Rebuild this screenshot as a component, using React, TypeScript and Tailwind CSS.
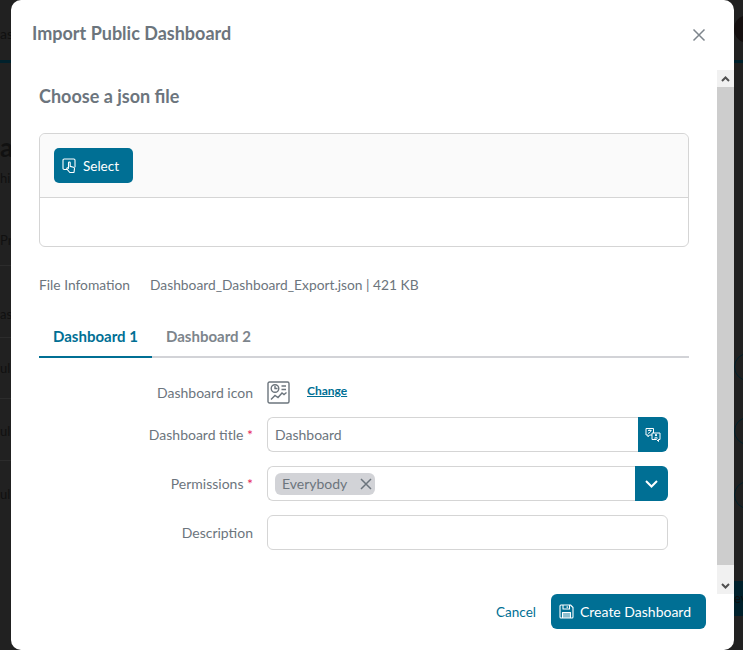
import React from 'react'

const font = "font-['Lato','Noto_Sans',sans-serif]"

const FormLabel = ({ text, required }: { text: string; required?: boolean }) => (
  <div className="w-[228px] shrink-0 pr-[14px] text-right text-[14px] text-[#6c757d]">
    {text}
    {required && <span className="text-[#e6265c]"> *</span>}
  </div>
)

const SelectIcon = () => (
  <svg width="16" height="16" viewBox="0 0 16 16" fill="none" stroke="white" strokeWidth="1.1" strokeLinejoin="round">
    <path d="M5 11.5H2.2c-.7 0-1.2-.5-1.2-1.2V2.2C1 1.5 1.5 1 2.2 1h9.6c.7 0 1.2.5 1.2 1.2v7" />
    <path d="M6.5 4.8c0-1.1 1.7-1.1 1.7 0v3.6l3.3.8c.7.2 1.1.8 1 1.5l-.5 3.8H7.8L5 11.2c-.7-.9.4-1.9 1.2-1.2l.3.3z" fill="#006f94" />
  </svg>
)

const ChartIcon = () => (
  <svg width="23" height="23" viewBox="0 0 23 23" fill="none" stroke="#6c757d" strokeWidth="1.4">
    <rect x="1" y="1" width="21" height="21" rx="1.5" />
    <circle cx="8" cy="7.5" r="3.8" />
    <path d="M8 5v2.5h2.5M14.5 5H19M14.5 8.5H19M4 18.5l4-4 3 2 4-4.5 2 1.5 2.5-2" />
  </svg>
)

const TranslateIcon = () => (
  <svg width="16" height="16" viewBox="0 0 16 16" fill="none" stroke="white" strokeWidth="1" strokeLinejoin="round">
    <path d="M1 1.5h7.5V8H4.5L3 9.8V8H1z" />
    <path d="M3 3.4h3.5M4.8 2.6v.8M6 3.4C5.6 5 4.4 6 3 6.4" />
    <path d="M7 6h8v6.5h-1.5v2l-2-2H7z" fill="#006f94" />
    <circle cx="11" cy="8.2" r="1.1" fill="white" stroke="none" />
    <path d="M9 11.4c.3-1.6 3.7-1.6 4 0z" fill="white" stroke="none" />
  </svg>
)

const SaveIcon = () => (
  <svg width="15" height="15" viewBox="0 0 15 15" fill="none" stroke="white" strokeWidth="1.1" strokeLinejoin="round">
    <path d="M1 2c0-.6.4-1 1-1h9.5L14 3.5V13c0 .6-.4 1-1 1H2c-.6 0-1-.4-1-1z" />
    <path d="M4 1v4h6.5V1M8.2 2.2v1.8" />
    <path d="M3.5 14V8.5h8V14" fill="white" fillOpacity="0.55" />
  </svg>
)

const Backdrop = () => (
  <div className="flex h-[650px] justify-between overflow-hidden bg-[#212121] text-[#101010]">
    <div className="flex w-[11px] flex-col overflow-hidden whitespace-nowrap text-[14px]">
      <div className="h-[60px] shrink-0 pt-[23px]">as</div>
      <div className="h-[3px] shrink-0 bg-[#00212c]" />
      <div className="h-[65px] shrink-0" />
      <div className="h-[38px] shrink-0 text-[26px] leading-[38px] font-bold text-[#111]">a</div>
      <div className="h-[99px] shrink-0 text-[13px]">
        <div className="pt-[4px] leading-[16px]">hi</div>
        <div className="pt-[46px] leading-[16px]">Pr</div>
      </div>
      <div className="h-[72px] shrink-0 border-t border-[#2c2c2c] pt-[40px] text-[13px] leading-[16px]">as</div>
      <div className="h-[61px] shrink-0 border-t border-[#2c2c2c] pt-[22px] text-[13px] leading-[16px]">ul</div>
      <div className="h-[62px] shrink-0 border-t border-[#2c2c2c] pt-[24px] text-[13px] leading-[16px]">ul</div>
      <div className="h-[62px] shrink-0 border-t border-[#2c2c2c] pt-[25px] text-[13px] leading-[16px]">ul</div>
    </div>
    <div className="flex w-[9px] flex-col overflow-hidden">
      <div className="h-[15px] shrink-0" />
      <div className="h-[28px] w-[28px] shrink-0 rounded-full bg-[#151010]" />
      <div className="h-[17px] shrink-0" />
      <div className="h-[3px] shrink-0 bg-[#00212c]" />
      <div className="h-[290px] shrink-0" />
      <div className="h-[28px] w-[28px] shrink-0 rounded-full border border-[#00212c]" />
      <div className="h-[36px] shrink-0" />
      <div className="h-[28px] w-[28px] shrink-0 rounded-full border border-[#00212c]" />
      <div className="h-[36px] shrink-0" />
      <div className="h-[28px] w-[28px] shrink-0 rounded-full border border-[#00212c]" />
      <div className="h-[72px] shrink-0" />
      <div className="h-[35px] shrink-0 bg-[#00212c] pt-[8px] text-[13px] text-[#0f0f0f]">ev</div>
    </div>
  </div>
)

const Scrollbar = () => (
  <div className="flex w-[17px] shrink-0 flex-col bg-[#f1f1f1]">
    <div className="flex h-[17px] shrink-0 items-center justify-center">
      <svg width="9" height="6" viewBox="0 0 9 6" fill="none" stroke="#505050" strokeWidth="2">
        <path d="M1 5l3.5-3.5L8 5" />
      </svg>
    </div>
    <div className="h-[478px] shrink-0 bg-[#cdcdcd]" />
    <div className="flex flex-1 items-end justify-center pb-[5px]">
      <svg width="9" height="6" viewBox="0 0 9 6" fill="none" stroke="#505050" strokeWidth="2">
        <path d="M1 1l3.5 3.5L8 1" />
      </svg>
    </div>
  </div>
)

export default function App() {
  return (
    <div className={`relative h-[650px] w-[743px] overflow-hidden ${font}`}>
      <Backdrop />

      <div className="absolute inset-y-0 left-[11px] right-[9px] flex flex-col rounded-[10px] bg-white">
        <div className="flex h-[70px] shrink-0 items-start justify-between pl-[21px] pr-[28px] pt-[20px]">
          <h2 className="text-[18px] leading-[26px] font-bold text-[#6c757d]">Import Public Dashboard</h2>
          <svg className="mt-[8px]" width="14" height="14" viewBox="0 0 14 14" stroke="#7d858c" strokeWidth="1.5">
            <path d="M1.5 1.5l11 11M12.5 1.5l-11 11" />
          </svg>
        </div>

        <div className="flex h-[524px] shrink-0">
          <div className="min-w-0 flex-1 pl-[28px] pr-[28px]">
            <h3 className="mt-[13px] text-[18px] leading-[26px] font-bold text-[#6c757d]">Choose a json file</h3>

            <div className="mt-[24px] h-[114px] rounded-[6px] border border-[#d5d5d5]">
              <div className="h-[64px] rounded-t-[6px] border-b border-[#d5d5d5] bg-[#fafafa] pl-[14px] pt-[14px]">
                <button className="flex h-[35px] w-[79px] items-center gap-[5px] rounded-[5px] bg-[#006f94] pl-[8px] text-[13.5px] text-white">
                  <SelectIcon />
                  <span className="mt-[1px]">Select</span>
                </button>
              </div>
            </div>

            <div className="mt-[28px] flex h-[20px] items-center text-[13.8px] text-[#6c757d]">
              <span className="w-[111px]">File Infomation</span>
              <span>Dashboard_Dashboard_Export.json | 421 KB</span>
            </div>

            <div className="mt-[23px] flex h-[40px] border-b-2 border-[#d2d3d7] text-[15px] font-bold">
              <div className="-mb-[2px] h-[40px] w-[113px] border-b-2 border-[#006f94] pl-[14px] pt-[8px] leading-[20px] text-[#006f94]">
                Dashboard 1
              </div>
              <div className="pl-[14px] pt-[8px] leading-[20px] text-[#7d858c]">Dashboard 2</div>
            </div>

            <div className="mt-[22px] flex h-[24px] items-center">
              <FormLabel text="Dashboard icon" />
              <ChartIcon />
              <a className="-mt-[2px] ml-[17px] text-[12px] font-bold text-[#006f94] underline">Change</a>
            </div>

            <div className="mt-[13px] flex items-center">
              <FormLabel text="Dashboard title" required />
              <div className="flex h-[35px] w-[401px]">
                <div className="flex flex-1 items-center rounded-l-[6px] border border-r-0 border-[#d5d5d5] pl-[7px] text-[14px] text-[#6c757d]">
                  Dashboard
                </div>
                <div className="flex w-[30px] items-center justify-center rounded-r-[6px] bg-[#006f94]">
                  <TranslateIcon />
                </div>
              </div>
            </div>

            <div className="mt-[14px] flex items-center">
              <FormLabel text="Permissions" required />
              <div className="flex h-[35px] w-[401px]">
                <div className="flex flex-1 items-center rounded-l-[6px] border border-r-0 border-[#d5d5d5] pl-[7px]">
                  <span className="flex h-[22px] w-[100px] items-center justify-between rounded-[6px] bg-[#d2d3d7] pl-[7px] pr-[3px] text-[14px] text-[#6c757d]">
                    Everybody
                    <svg width="12" height="12" viewBox="0 0 12 12" stroke="#6c757d" strokeWidth="1.5">
                      <path d="M1 1l10 10M11 1L1 11" />
                    </svg>
                  </span>
                </div>
                <div className="flex w-[33px] items-center justify-center rounded-r-[6px] bg-[#006f94]">
                  <svg width="13" height="8" viewBox="0 0 13 8" fill="none" stroke="white" strokeWidth="2">
                    <path d="M1 1l5.5 5.5L12 1" />
                  </svg>
                </div>
              </div>
            </div>

            <div className="mt-[14px] flex items-center">
              <FormLabel text="Description" />
              <div className="h-[35px] w-[401px] rounded-[6px] border border-[#d5d5d5]" />
            </div>
          </div>
          <Scrollbar />
        </div>

        <div className="flex flex-1 items-start justify-end gap-[15px] pr-[28px]">
          <span className="mt-[8px] text-[13.5px] leading-[20px] text-[#006f94]">Cancel</span>
          <button className="flex h-[35px] w-[155px] items-center gap-[6px] rounded-[6px] bg-[#006f94] pl-[8px] text-[14px] text-white">
            <SaveIcon />
            Create Dashboard
          </button>
        </div>
      </div>
    </div>
  )
}
